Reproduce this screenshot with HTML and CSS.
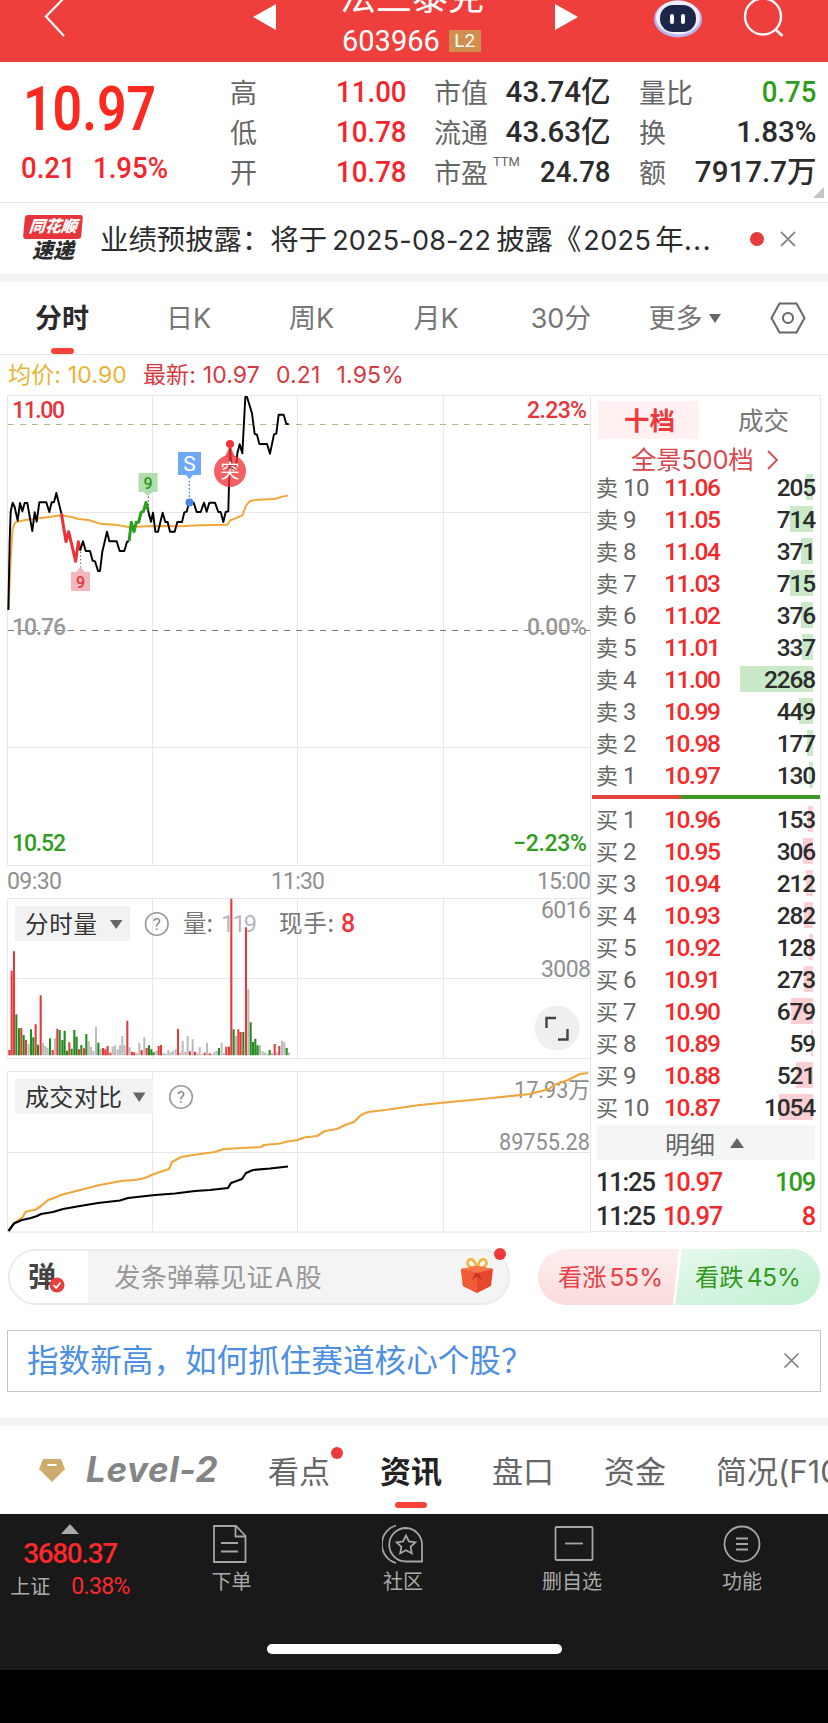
FILE: index.html
```
<!DOCTYPE html>
<html lang="zh-CN">
<head>
    <meta charset="UTF-8">
    <meta name="viewport" content="width=device-width, initial-scale=1.0">
    <title>603966</title>
    <link rel="stylesheet" href="styles.css">
</head>
<body>
    <!-- Header -->
    <header class="header">
        <svg class="header-back" width="24" height="38" viewBox="0 0 24 38"><path d="M21 -2L3 16.500L21 36" fill="none" stroke="#fff" stroke-width="2.200"/></svg>
        <svg class="header-prev" width="24" height="26" viewBox="0 0 24 26"><path d="M23 0V26L0 13z" fill="#fff"/></svg>
        <div class="header-title">
            <div class="stock-name">法兰泰克</div>
            <div class="stock-code">603966<span class="l2">L2</span></div>
        </div>
        <svg class="header-next" width="24" height="26" viewBox="0 0 24 26"><path d="M0 0V26L23 13z" fill="#fff"/></svg>
        <svg class="header-robot" width="50" height="38" viewBox="0 0 50 38">
            <ellipse cx="25" cy="19" rx="24" ry="18.500" fill="#b9b5f2"/>
            <ellipse cx="25" cy="17.500" rx="22" ry="17" fill="#f1efff"/>
            <rect x="7" y="5" width="36" height="27" rx="13" fill="#1b2648"/>
            <rect x="17" y="14" width="4" height="10" rx="2" fill="#fff"/>
            <rect x="28" y="14" width="4" height="10" rx="2" fill="#fff"/>
        </svg>
        <svg class="header-search" width="42" height="38" viewBox="0 0 42 38"><circle cx="20" cy="16.500" r="18" fill="none" stroke="#fff" stroke-width="2.400"/><path d="M32 29l7.500 7" stroke="#fff" stroke-width="2.600"/></svg>
    </header>

    <!-- Quote -->
    <section class="quote">
        <div class="quote-price">
            <div class="price-big">10.97</div>
            <div class="price-change"><span class="num left">0.21</span><span class="num left">1.95%</span></div>
        </div>
        <dl class="quote-col col-a">
            <dt>高</dt><dd class="red"><span class="num">11.00</span></dd>
            <dt>低</dt><dd class="red"><span class="num">10.78</span></dd>
            <dt>开</dt><dd class="red"><span class="num">10.78</span></dd>
        </dl>
        <dl class="quote-col col-b">
            <dt>市值</dt><dd><span class="num wide">43.74亿</span></dd>
            <dt>流通</dt><dd><span class="num wide">43.63亿</span></dd>
            <dt>市盈<sup>TTM</sup></dt><dd><span class="num">24.78</span></dd>
        </dl>
        <dl class="quote-col col-c">
            <dt>量比</dt><dd class="green"><span class="num">0.75</span></dd>
            <dt>换</dt><dd><span class="num wide">1.83%</span></dd>
            <dt>额</dt><dd><span class="num wide">7917.7万</span></dd>
        </dl>
        <i class="quote-corner"></i>
    </section>

    <!-- News -->
    <section class="news">
        <div class="news-logo"><b>同花顺</b><span>速递</span></div>
        <p class="news-text">业绩预披露：将于<span class="news-date">2025-08-22</span>披露《<span class="news-year">2025</span>年<span class="dots">...</span></p>
        <i class="news-dot"></i>
        <svg width="16" height="16" viewBox="0 0 16 16"><path d="M1 1L15 15M15 1L1 15" stroke="#888" stroke-width="1.800"/></svg>
    </section>

    <!-- Period tabs -->
    <nav class="periods">
        <span class="active">分时</span>
        <span>日K</span>
        <span>周K</span>
        <span>月K</span>
        <span>30分</span>
        <span class="more">更多<i></i></span>
        <svg width="36" height="32" viewBox="0 0 36 32"><path d="M9.500 1.500H26.500L34.500 16L26.500 30.500H9.500L1.500 16z" fill="none" stroke="#666" stroke-width="2"/><circle cx="18" cy="16" r="5" fill="none" stroke="#666" stroke-width="2"/></svg>
    </nav>

    <div class="legend">
        <span class="avg">均价: 10.90</span>
        <span>最新: 10.97</span>
        <span>0.21</span>
        <span>1.95%</span>
    </div>

    <main class="main">
        <!-- Charts: price, volume, turnover comparison -->
        <svg class="charts" width="592" height="841" viewBox="0 395 592 841">
            <path class="grid" d="M7.500 395.500H591M7.500 512.500H591M7.500 747.500H591M7.500 865.500H591M7.500 395.500V865M152.500 395.500V865M297.500 395.500V865M443.500 395.500V865M590.500 395.500V1232"/>
            <path class="grid" d="M7.500 898.500H591M7.500 978.500H591M7.500 1058.500H591M7.500 898.500V1058M152.500 898.500V1058M297.500 898.500V1058M443.500 898.500V1058"/>
            <path class="grid" d="M7.500 1071.500H591M7.500 1152.500H591M7.500 1232H591M7.500 1071.500V1232M152.500 1071.500V1232M297.500 1071.500V1232M443.500 1071.500V1232"/>
            <path d="M8 424.500H591" stroke="#b3b78c" stroke-dasharray="6 6"/>
            <path d="M8 630.500H591" stroke="#777" stroke-dasharray="6 6"/>

            <g class="digits" font-size="23" font-weight="500">
                <text x="12" y="418" textLength="53" fill="#e8343b">11.00</text>
                <text x="527" y="418" textLength="60" fill="#e8343b">2.23%</text>
                <text x="12" y="635" textLength="54" fill="#999">10.76</text>
                <text x="527" y="635" textLength="60" fill="#999">0.00%</text>
                <text x="12" y="851" textLength="54" fill="#2f9e1d">10.52</text>
                <text x="513" y="851" textLength="74" fill="#2f9e1d">−2.23%</text>
            </g>
            <g class="digits" font-size="23" fill="#8f8f8f">
                <text x="7" y="889" textLength="55">09:30</text>
                <text x="271" y="889" textLength="54">11:30</text>
                <text x="537" y="889" textLength="54">15:00</text>
                <text x="541" y="918" textLength="50">6016</text>
                <text x="541" y="977" textLength="50">3008</text>
            </g>

            <!-- price line -->
            <g transform="translate(0 385) scale(.33333)" fill="none" stroke-linejoin="round" stroke-width="5.800">
                <path stroke="#f3a638" d="M26 670L32 520L38 430L46 412L75 405L120 400L185 391L215 396L235 402L265 405L300 416L345 419L385 426L440 424L490 423L545 424L600 421L682 419L690 407L727 391L738 362L750 348L775 344L825 342L845 335L865 332"/>
                <path stroke="#000" d="M25 675L29 470L32 380L38 353L44 366L53 407L60 354L67 379L74 354L82 354L90 400L97 438L104 382L110 410L118 352L139 352L148 381L155 352L162 352L169 324L184 385"/>
                <path stroke="#ee3338" stroke-width="9" d="M184 385L198 470L206 440L227 529L235 470L240 495"/>
                <path stroke="#000" d="M240 497L249 469L257 498L270 498L278 527L285 529L294 558L300 558L307 500L321 440L328 469L350 469L359 498L373 498L381 470L387 469"/>
                <path stroke="#2ba01f" stroke-width="9" d="M387 469L394 412L402 440L409 412L416 412L423 382L430 380L438 352L444 375"/>
                <path stroke="#000" d="M444 375L453 410L459 383L466 440L474 440L488 383L496 411L503 411L510 440L524 440L532 411L546 411L553 382L560 380L567 353L581 353L590 381L602 381L612 353L620 380L628 353L645 353L655 381L662 381L670 411L677 381L685 379L690 180L694 235L702 260L709 235L712 205L719 178L727 205L736 36L741 36L756 85L764 147L771 149L778 177L801 177L810 206L816 177L822 148L829 146L836 89L851 89L859 117L866 117"/>
                <path stroke="#a33" stroke-width="3" stroke-dasharray="4 7" d="M242 500V550"/>
                <path stroke="#333" stroke-width="3" stroke-dasharray="4 7" d="M445 335V395"/>
                <path stroke="#4b8ae5" stroke-width="4" stroke-dasharray="5 6" d="M568 276V345"/>
            </g>
            <g text-anchor="middle">
                <circle cx="189.500" cy="502.500" r="4" fill="#4a86e8"/>
                <path d="M71 572h5l4.500-5 4.500 5h5v19H71z" fill="#f3b7bd"/>
                <text x="80.500" y="588" font-size="16" font-weight="500" fill="#e4343c" class="digits">9</text>
                <path d="M138.500 473h19v19h-5l-4.500 4-4.500-4h-5z" fill="#b0dfad"/>
                <text x="148" y="489" font-size="16" font-weight="500" fill="#329626" class="digits">9</text>
                <path d="M178 452h23v23h-8l-3.500 4-3.500-4h-8z" fill="#6fa8f6"/>
                <text x="189.500" y="471" font-size="21" fill="#fff" class="digits">S</text>
                <circle cx="230" cy="444" r="4" fill="#f03439"/>
                <circle cx="230" cy="471" r="16" fill="#f03439" fill-opacity=".78"/>
                <path d="M225 457l5-12 5 12z" fill="#f03439" fill-opacity=".78"/>
                <text x="230" y="478" font-size="19" fill="#fff">突</text>
            </g>

            <!-- volume -->
            <rect x="15" y="906" width="115" height="35" fill="#f2f2f2"/>
            <text x="25" y="932.500" font-size="23.500" fill="#333" textLength="72">分时量</text>
            <path d="M110 920H122.500L116.200 929z" fill="#666"/>
            <g fill="none" stroke="#999" stroke-width="1.600"><circle cx="156.800" cy="924" r="11.300"/><circle cx="181" cy="1097" r="11.300"/></g>
            <g class="digits" font-size="17" fill="#888" text-anchor="middle"><text x="156.800" y="930">?</text><text x="181" y="1103">?</text></g>
            <text x="183" y="931.500" font-size="23.500" fill="#777">量:</text>
            <text x="221" y="931.500" font-size="23.500" fill="#b5b7bd" class="digits" textLength="36">119</text>
            <text x="279" y="931.500" font-size="23.500" fill="#777" textLength="55">现手:</text>
            <text x="341" y="931.500" font-size="25" font-weight="500" fill="#f5333a" class="digits">8</text>
            <g transform="translate(0 820) scale(.33333)" fill="none" stroke-width="6.200">
                <path stroke="#bbb" d="M86 706V672M129 706V668M136 706V678M143 706V684M165 706V655M266 706V664M273 706V680M280 706V692M288 706V620M302 706V686M338 706V680M345 706V676M353 706V688M360 706V676M367 706V648M374 706V676M389 706V682M411 706V700M418 706V668M433 706V652M469 706V692M491 706V700M498 706V701M505 706V690M512 706V697M519 706V692M527 706V688M541 706V698M548 706V662M556 706V695M563 706V648M578 706V658M592 706V700M599 706V682M607 706V702M621 706V668M636 706V702M643 706V696M650 706V692M665 706V668M672 706V700M708 706V648M745 706V508M780 706V676M788 706V694M795 706V698M802 706V702M816 706V698M831 706V697M846 706V662M853 706V666M867 706V698"/>
                <path stroke="#e5393c" d="M28 706V690M35 706V452M42 706V394M64 706V624M78 706V660M107 706V613M122 706V526M158 706V690M172 706V626M208 706V667M237 706V688M252 706V685M309 706V684M316 706V688M323 706V678M331 706V698M382 706V602M396 706V695M403 706V697M425 706V690M440 706V684M476 706V678M483 706V675M534 706V627M570 706V694M585 706V695M614 706V698M629 706V700M679 706V680M687 706V680M694 706V236M715 706V628M722 706V636M738 706V322M824 706V672M838 706V678"/>
                <path stroke="#218c1c" d="M49 706V583M57 706V625M71 706V645M93 706V628M100 706V652M114 706V674M150 706V655M179 706V630M187 706V660M194 706V632M201 706V692M215 706V686M223 706V630M230 706V650M244 706V675M259 706V642M295 706V668M447 706V676M454 706V688M461 706V697M657 706V684M701 706V628M730 706V636M752 706V607M759 706V666M766 706V656M773 706V676M809 706V690M860 706V684"/>
            </g>
            <circle cx="557" cy="1028" r="22.500" fill="#efefef"/>
            <path d="M546.500 1028V1018H556M567.500 1029V1039.500H558" fill="none" stroke="#444" stroke-width="2.400"/>

            <!-- turnover comparison -->
            <rect x="15" y="1079" width="138" height="35" fill="#f2f2f2"/>
            <text x="25" y="1106" font-size="24" fill="#333" textLength="97">成交对比</text>
            <path d="M133 1092.500H145.500L139.200 1102z" fill="#666"/>
            <g class="digits" font-size="23" fill="#8f8f8f">
                <text x="514" y="1098" textLength="76" lengthAdjust="spacingAndGlyphs">17.93万</text>
                <text x="499" y="1150" textLength="91" lengthAdjust="spacingAndGlyphs">89755.28</text>
            </g>
            <g fill="none" stroke-width="2.200" stroke-linejoin="round">
                <path stroke="#f0a63a" d="M8.500 1231L14 1223L22 1218L25.500 1212L28.500 1211L35 1210L41 1206L48 1200L54 1198L61 1195L80 1190L100 1185L121 1181L135 1180L145 1178L154 1174L169 1169L172 1162L181 1157L193 1155L215 1152L224 1149L261 1147L264 1145L280 1143.500L287 1141.500L298 1140L304 1137.500L317 1136L325 1131L337 1129L345 1125L354 1122L361 1115L368 1112L385 1110L420 1105L450 1102L492 1098L530 1094L549 1089L554 1085L568 1080L580 1074L588 1073"/>
                <path stroke="#000" d="M8.500 1231L14 1223.500L22 1220L31 1218L37 1216L41 1214L53 1212L63 1209L80 1206L98 1203L120 1200.500L128 1198L155 1195L175 1193.500L195 1191L210 1190L228 1188L231 1183L242 1179L246 1173L253 1170L270 1168.500L288 1166.500"/>
            </g>
        </svg>

        <!-- Order book -->
        <aside class="book">
            <div class="book-tabs"><span class="on">十档</span><span>成交</span></div>
            <div class="book-full">全景500档<svg width="11" height="20" viewBox="0 0 11 20"><path d="M1 1L10 10L1 19" fill="none" stroke="#d9474d" stroke-width="1.800"/></svg></div>
            <ul class="levels sell">
                <li><span>卖<em>10</em></span><b>11.06</b><i style="width:7px"></i><strong>205</strong></li>
                <li><span>卖<em>9</em></span><b>11.05</b><i style="width:23px"></i><strong>714</strong></li>
                <li><span>卖<em>8</em></span><b>11.04</b><i style="width:12px"></i><strong>371</strong></li>
                <li><span>卖<em>7</em></span><b>11.03</b><i style="width:23px"></i><strong>715</strong></li>
                <li><span>卖<em>6</em></span><b>11.02</b><i style="width:12px"></i><strong>376</strong></li>
                <li><span>卖<em>5</em></span><b>11.01</b><i style="width:11px"></i><strong>337</strong></li>
                <li><span>卖<em>4</em></span><b>11.00</b><i style="width:73px"></i><strong>2268</strong></li>
                <li><span>卖<em>3</em></span><b>10.99</b><i style="width:14px"></i><strong>449</strong></li>
                <li><span>卖<em>2</em></span><b>10.98</b><i style="width:6px"></i><strong>177</strong></li>
                <li><span>卖<em>1</em></span><b>10.97</b><i style="width:4px"></i><strong>130</strong></li>
            </ul>
            <div class="book-ratio"></div>
            <ul class="levels buy">
                <li><span>买<em>1</em></span><b>10.96</b><i style="width:5px"></i><strong>153</strong></li>
                <li><span>买<em>2</em></span><b>10.95</b><i style="width:10px"></i><strong>306</strong></li>
                <li><span>买<em>3</em></span><b>10.94</b><i style="width:7px"></i><strong>212</strong></li>
                <li><span>买<em>4</em></span><b>10.93</b><i style="width:9px"></i><strong>282</strong></li>
                <li><span>买<em>5</em></span><b>10.92</b><i style="width:4px"></i><strong>128</strong></li>
                <li><span>买<em>6</em></span><b>10.91</b><i style="width:9px"></i><strong>273</strong></li>
                <li><span>买<em>7</em></span><b>10.90</b><i style="width:22px"></i><strong>679</strong></li>
                <li><span>买<em>8</em></span><b>10.89</b><i style="width:2px"></i><strong>59</strong></li>
                <li><span>买<em>9</em></span><b>10.88</b><i style="width:17px"></i><strong>521</strong></li>
                <li><span>买<em>10</em></span><b>10.87</b><i style="width:34px"></i><strong>1054</strong></li>
            </ul>
            <div class="detail-bar">明细<i></i></div>
            <ul class="ticks">
                <li><span>11:25</span><b>10.97</b><strong class="green">109</strong></li>
                <li><span>11:25</span><b>10.97</b><strong class="red">8</strong></li>
            </ul>
        </aside>
    </main>

    <!-- Comment bar -->
    <section class="comment">
        <div class="comment-box">
            <div class="danmu">弹<svg width="16" height="16" viewBox="0 0 16 16"><circle cx="8" cy="8" r="7.500" fill="#e8403d"/><path d="M4.500 8l2.700 2.800L11.500 5.500" fill="none" stroke="#fff" stroke-width="1.800"/></svg></div>
            <div class="comment-input">发条弹幕见证<span>A</span>股</div>
            <svg class="gift" width="34" height="36" viewBox="0 0 34 36">
                <path d="M16 10C10 10 6 7 8 3s8-1 8 7M18 10c6 0 10-3 8-7s-8-1-8 7" fill="none" stroke="#f1b53c" stroke-width="2.600"/>
                <path d="M1 11L17 8L33 11L31 28L17 35L3 28z" fill="#e7482d"/>
                <path d="M1 11L17 15L33 11L17 8z" fill="#f7774a"/>
                <path d="M17 15V35L3 28L1 11z" fill="#f05b38"/>
                <path d="M15 15L12 22L17 19L22 22L19 15z" fill="#c93324"/>
            </svg>
            <i class="red-dot"></i>
        </div>
        <div class="vote">
            <span class="up">看涨<em>55%</em></span>
            <span class="down">看跌<em>45%</em></span>
        </div>
    </section>

    <section class="promo">
        <span>指数新高，如何抓住赛道核心个股？</span>
        <svg width="15" height="15" viewBox="0 0 15 15"><path d="M.5 .5L14.500 14.500M14.500 .5L.5 14.500" stroke="#777" stroke-width="1.500"/></svg>
    </section>

    <!-- Info tabs -->
    <nav class="info-tabs">
        <svg width="28" height="25" viewBox="0 0 28 25"><path d="M5 1H23L27 11L14 24L1 11z" fill="#cfac6e"/><path d="M9.500 7H18.500" stroke="#fff" stroke-width="2"/></svg>
        <span class="level2">Level-2</span>
        <span class="kd">看点<i class="red-dot"></i></span>
        <span class="active">资讯</span>
        <span>盘口</span>
        <span>资金</span>
        <span>简况(F10)</span>
    </nav>

    <!-- Bottom bar -->
    <footer class="bottom">
        <div class="bottom-row">
            <div class="index">
                <i></i>
                <b>3680.37</b>
                <p>上证<em>0.38%</em></p>
            </div>
            <div class="tool doc">
                <svg width="40" height="40" viewBox="0 0 40 40"><path d="M4 2H26L35.500 12V38H4zM25.500 2V12.500H35M11 19H28M11 27.500H28"/></svg>
                <span>下单</span>
            </div>
            <div class="tool">
                <svg width="42" height="40" viewBox="0 0 42 40"><path d="M24 4A16.500 16.500 0 1 0 24 37.500H40V20.500A16.500 16.500 0 0 0 24 4zM14 1.500A19.500 19.500 0 0 0 14 39"/><path d="M24 11.500L26.900 17.500L33.300 18.300L28.600 22.800L29.800 29.300L24 26.200L18.200 29.300L19.400 22.800L14.700 18.300L21.100 17.500z"/></svg>
                <span>社区</span>
            </div>
            <div class="tool remove">
                <svg width="40" height="40" viewBox="0 0 40 40"><rect x="1.500" y="3" width="37" height="33" rx="1"/><path d="M11 19.500H29"/></svg>
                <span>删自选</span>
            </div>
            <div class="tool">
                <svg width="40" height="40" viewBox="0 0 40 40"><circle cx="20" cy="20" r="17.500"/><path d="M14 14.500H26M14 20H26M14 25.500H26"/></svg>
                <span>功能</span>
            </div>
        </div>
        <div class="home-indicator"></div>
    </footer>
</body>
</html>
```

FILE: styles.css
```
* {
    box-sizing: border-box;
}

body {
    margin: 0;
    width: 828px;
    height: 1723px;
    overflow: hidden;
    background-color: #000;
    font-family: Inter, "Noto Sans CJK SC", sans-serif;
    color: #2c2c2c;
}

ul, dl, dd, p {
    margin: 0;
    padding: 0;
    list-style: none;
}

em, i {
    font-style: normal;
}

svg {
    display: block;
    flex: none;
}

.red {
    color: #f5262b;
}

.green {
    color: #2f9e1d;
}

.num {
    display: inline-block;
    transform: scaleX(.92);
    transform-origin: right;
}

.num.left {
    transform-origin: left;
}

.num.wide {
    transform: scaleX(.985);
}

/* Header */
.header {
    height: 62px;
    background-color: #ee3f3c;
    display: flex;
    align-items: flex-start;
    overflow: hidden;
    color: #fff;
}

.header-back {
    margin-left: 43px;
}

.header-prev {
    margin: 4px 0 0 186px;
}

.header-title {
    width: 160px;
    margin-left: 61px;
}

.stock-name {
    height: 28px;
    margin: -5px 0 0 2px;
    line-height: 4px;
    font-size: 36px;
    white-space: nowrap;
}

.stock-code {
    display: flex;
    align-items: center;
    height: 36px;
    padding-left: 4px;
    font-family: Roboto, sans-serif;
    font-size: 29px;
}

.l2 {
    width: 32px;
    height: 22px;
    margin-left: 9px;
    background-color: #d18f4e;
    font-size: 19px;
    line-height: 22px;
    text-align: center;
}

.header-next {
    margin: 4px 0 0 57px;
}

.header-robot {
    margin-left: 74px;
}

.header-search {
    margin-left: 40px;
}

/* Quote */
.quote {
    position: relative;
    height: 141px;
    padding-top: 9px;
    background-color: #fff;
    border-bottom: 1px solid #e6e6e6;
    display: flex;
    font-family: Roboto, "Noto Sans CJK SC", sans-serif;
}

.quote-price {
    width: 230px;
    color: #fb291f;
}

.price-big {
    width: 160px;
    height: 77px;
    padding-left: 23px;
    font-size: 61px;
    font-weight: 600;
    line-height: 77px;
    transform: scaleX(.85);
    transform-origin: 23px 0;
}

.price-change {
    display: flex;
    height: 40px;
    padding-left: 21px;
    gap: 12px;
    color: #f5262b;
    font-size: 30px;
    font-weight: 500;
    line-height: 40px;
}

.quote-col {
    display: grid;
    grid-template-columns: auto 1fr;
    grid-auto-rows: 40px;
    line-height: 42px;
    white-space: nowrap;
}

.quote-col dt {
    width: 54px;
    height: 40px;
    padding-top: 2px;
    font-size: 27px;
    color: #666;
}

.quote-col dd {
    text-align: right;
    font-size: 30px;
    font-weight: 500;
}

.quote-col sup {
    font-size: 13px;
    margin-left: 5px;
    line-height: 0;
    vertical-align: 17px;
}

.col-a {
    width: 177px;
}

.col-b {
    width: 177px;
    margin-left: 27px;
}

.col-c {
    width: 177px;
    margin-left: 28px;
}

.quote-corner {
    position: absolute;
    right: 4px;
    bottom: 4px;
    border-left: 11px solid transparent;
    border-bottom: 11px solid #c4c4c4;
}

/* News */
.news {
    height: 71px;
    padding-left: 24px;
    background-color: #fff;
    display: flex;
    align-items: center;
}

.news-logo {
    width: 58px;
    text-align: center;
    line-height: 23px;
    font-weight: 900;
    font-style: italic;
}

.news-logo b {
    display: block;
    height: 24px;
    border-radius: 3px;
    background-color: #e7363b;
    color: #fff;
    font-size: 16px;
    font-weight: 900;
    transform: skewX(-5deg);
}

.news-logo span {
    display: block;
    height: 24px;
    font-size: 21px;
}

.news-text {
    width: 648px;
    margin: -3px 0 0 18px;
    font-size: 28.4px;
    white-space: nowrap;
}

.news-date {
    margin: 0 5px;
    font-size: 27px;
    letter-spacing: .2px;
}

.news-year {
    margin: 0 4px 0 2px;
    font-size: 27px;
    letter-spacing: .4px;
}

.dots {
    letter-spacing: 1.2px;
}

.news-dot {
    width: 14px;
    height: 14px;
    margin: 0 16px 0 2px;
    border-radius: 50%;
    background-color: #e53b3b;
}

/* Period tabs */
.periods {
    position: relative;
    height: 81px;
    border-top: 8px solid #f3f3f3;
    border-bottom: 1px solid #e8e8e8;
    background-color: #fff;
    display: grid;
    grid-template-columns: 124px 129px 117px 132px 118px 132px auto;
    align-items: center;
    font-size: 27px;
    color: #777;
}

.periods span {
    margin-top: -3px;
    text-align: center;
}

.periods .active {
    font-weight: 700;
    color: #2a2a2a;
}

.periods .active::after,
.info-tabs .active::after {
    content: "";
    position: absolute;
    left: 51px;
    bottom: 0;
    width: 23px;
    height: 6px;
    border-radius: 3px;
    background-color: #f9423a;
}

.periods .more {
    margin-left: -3px;
}

.periods .more i {
    display: inline-block;
    margin: 0 0 5px 6px;
    border: 6px solid transparent;
    border-top: 9px solid #666;
    border-bottom: 0;
}

.periods svg {
    margin-left: 18px;
}

.legend {
    height: 40px;
    padding-left: 8px;
    background-color: #fff;
    display: flex;
    gap: 16px;
    align-items: center;
    font-size: 23px;
    line-height: 38px;
    letter-spacing: .15px;
    color: #d8383f;
}

.legend .avg {
    color: #e8b435;
}

/* Charts */
.main {
    height: 841px;
    background-color: #fff;
    display: flex;
}

.charts {
    font-family: "Noto Sans CJK SC", sans-serif;
}

.charts .digits {
    font-family: Roboto, "Noto Sans CJK SC", sans-serif;
}

.grid {
    fill: none;
    stroke: #e8e6e6;
}

/* Order book */
.book {
    width: 229px;
    height: 837px;
    border: 1px solid #e8e8e8;
    border-left: 0;
    font-family: Roboto, "Noto Sans CJK SC", sans-serif;
}

.book-tabs {
    display: flex;
    padding: 5px 0 0 6px;
}

.book-tabs span {
    width: 101px;
    height: 38px;
    line-height: 40px;
    text-align: center;
    font-size: 25.5px;
    color: #777;
}

.book-tabs span + span {
    width: 121px;
    padding-left: 8px;
}

.book-tabs .on {
    padding-left: 2px;
    background-color: #fff1f2;
    color: #f0393b;
    font-weight: 700;
}

.book-full {
    display: flex;
    align-items: center;
    gap: 14px;
    height: 33px;
    padding: 9px 0 0 39px;
    font-family: Inter, "Noto Sans CJK SC", sans-serif;
    font-size: 25.5px;
    line-height: 32px;
    letter-spacing: -.3px;
    color: #d9474d;
}

.levels li {
    position: relative;
    display: grid;
    grid-template-columns: 68px 1fr auto;
    height: 32px;
    padding: 0 5px 0 4px;
    line-height: 32px;
    font-size: 24.5px;
    letter-spacing: -1.4px;
    white-space: nowrap;
}

.levels span {
    font-size: 22px;
    color: #666;
    letter-spacing: 0;
}

.levels em {
    margin-left: 5px;
    font-size: 24px;
    letter-spacing: -.6px;
}

.levels b, .ticks b {
    font-weight: 500;
    color: #f32a2b;
}

.levels strong, .ticks strong {
    position: relative;
    font-weight: 500;
}

.levels strong {
    letter-spacing: -1.2px;
}

/* depth bar behind the volume */
.levels i {
    position: absolute;
    right: 7px;
    top: 2px;
    height: 26px;
    background-color: #c9e9c8;
}

.buy i {
    background-color: #fbcfd4;
}

.book-ratio {
    height: 4px;
    margin: 3px 0 5px;
    background: linear-gradient(to right, #e2453c 89px, #3b9a24 89px);
}

.detail-bar {
    display: flex;
    align-items: center;
    height: 35px;
    margin: 1px 5px 0;
    padding-left: 68px;
    background-color: #f4f5f5;
    font-size: 25px;
    color: #666;
}

.detail-bar i {
    margin-left: 15px;
    border: 7px solid transparent;
    border-bottom: 10px solid #666;
    border-top: 0;
}

.ticks {
    padding-top: 5px;
}

.ticks li {
    display: grid;
    grid-template-columns: 67px 1fr auto;
    height: 34px;
    padding: 0 5px 0 4px;
    line-height: 34px;
    font-size: 25.5px;
    font-weight: 500;
    letter-spacing: -1.2px;
}

/* Comment bar */
.comment {
    height: 94px;
    padding: 13px 8px 0;
    background-color: #fff;
    display: flex;
    justify-content: space-between;
}

.comment-box {
    position: relative;
    width: 502px;
    height: 56px;
    border: 2px solid #ececec;
    border-radius: 28px;
    background-color: #f4f4f4;
    display: flex;
    align-items: center;
}

.danmu {
    display: flex;
    align-items: center;
    width: 78px;
    height: 52px;
    padding-left: 18px;
    border-radius: 26px 0 0 26px;
    background-color: #fff;
    font-size: 28px;
    font-weight: 700;
    line-height: 46px;
    color: #444;
}

.danmu svg {
    margin: 16px 0 0 -7px;
}

.comment-input {
    width: 364px;
    margin-top: -4px;
    padding-left: 26px;
    font-size: 26.5px;
    color: #999;
}

.comment-input span {
    margin: 0 2px;
}

.gift {
    margin: -2px 0 0 8px;
}

.red-dot {
    position: absolute;
    width: 12px;
    height: 12px;
    border-radius: 50%;
    background-color: #ee3a3a;
}

.comment-box .red-dot {
    left: 484px;
    top: -3px;
}

.vote {
    display: flex;
    width: 282px;
    height: 56px;
    border-radius: 28px;
    overflow: hidden;
    font-size: 24.3px;
    line-height: 57px;
}

.vote em {
    margin-left: 3px;
}

.up {
    width: 143px;
    padding-left: 20px;
    background: linear-gradient(#fdeeee, #fbdcdc);
    clip-path: polygon(0 0, 100% 0, 135px 100%, 0 100%);
    color: #e84045;
}

.down {
    width: 147px;
    margin-left: -4px;
    padding-left: 20px;
    background: linear-gradient(to bottom right, #e6f8ec, #c1f0d2);
    clip-path: polygon(7px 0, 100% 0, 100% 100%, 0 100%);
    color: #339920;
}

/* Promo */
.promo {
    height: 88px;
    padding: 0 7px 26px;
    background-color: #fff;
    display: flex;
    position: relative;
}

.promo span {
    width: 814px;
    height: 62px;
    border: 1px solid #c4c4c4;
    padding-left: 19px;
    line-height: 60px;
    font-size: 31.6px;
    color: #4d8fe2;
}

.promo svg {
    position: absolute;
    left: 784px;
    top: 23px;
}

/* Info tabs */
.info-tabs {
    position: relative;
    height: 96px;
    border-top: 8px solid #f3f3f3;
    padding-left: 38px;
    background-color: #fff;
    display: flex;
    align-items: center;
    overflow: hidden;
    white-space: nowrap;
    font-size: 31px;
    color: #666;
}

.info-tabs span {
    width: 112px;
    margin-top: -2px;
    flex: none;
}

.info-tabs .level2 {
    width: 181px;
    padding-left: 20px;
    font-size: 35px;
    font-weight: 700;
    font-style: italic;
    letter-spacing: .6px;
    color: #858585;
}

.info-tabs .kd {
    margin-left: 21px;
}

.kd .red-dot {
    left: 331px;
    top: 21px;
}

.info-tabs .active {
    font-weight: 700;
    color: #222;
}

.info-tabs .active::after {
    left: 395px;
    bottom: 6px;
    width: 32px;
}

/* Bottom bar */
.bottom {
    height: 156px;
    background-color: #191919;
    color: #aaa;
}

.bottom-row {
    display: grid;
    grid-template-columns: 142px 179px 164px 174px 166px;
    height: 130px;
}

.index {
    display: flex;
    flex-direction: column;
    align-items: center;
    padding: 10px 2px 0 0;
    font-family: Roboto, "Noto Sans CJK SC", sans-serif;
}

.index i {
    border: 9px solid transparent;
    border-bottom: 10px solid #aaa;
    border-top: 0;
}

.index b {
    font-size: 28px;
    font-weight: 500;
    line-height: 40px;
    letter-spacing: -1.4px;
    color: #fc282b;
}

.index p {
    font-size: 20px;
    line-height: 25px;
}

.index em {
    margin-left: 21px;
    font-size: 23px;
    letter-spacing: -.6px;
    color: #fc282b;
}

.tool {
    display: flex;
    flex-direction: column;
    align-items: center;
    padding-top: 10px;
    font-size: 20px;
    line-height: 37px;
}

.doc svg {
    margin-left: -4px;
}

.remove svg {
    margin-left: 3px;
}

.tool svg {
    fill: none;
    stroke: #a5a5a5;
    stroke-width: 1.8;
}

.home-indicator {
    width: 295px;
    height: 10px;
    margin: 0 auto;
    border-radius: 5px;
    background-color: #fff;
}
```
